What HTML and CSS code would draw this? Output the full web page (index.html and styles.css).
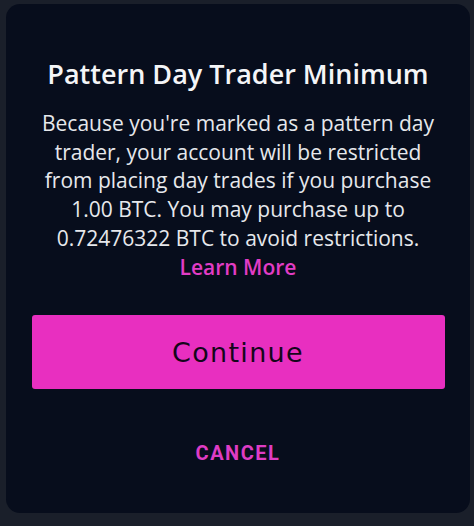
FILE: index.html
```html
<!DOCTYPE html>
<html>
<head>
<meta charset="utf-8">
<link rel="stylesheet" href="styles.css">
</head>
<body>
<div class="modal">
  <h1 class="title">Pattern Day Trader Minimum</h1>
  <p class="body">Because you're marked as a pattern day<br>trader, your account will be restricted<br>from placing day trades if you purchase<br>1.00 BTC. You may purchase up to<br>0.72476322 BTC to avoid restrictions.</p>
  <a class="learn">Learn More</a>
  <button class="continue">Continue</button>
  <button class="cancel">CANCEL</button>
</div>
</body>
</html>
```
FILE: styles.css
```css
html, body {
  margin: 0;
  padding: 0;
  background: #1a1f2a;
  width: 474px;
  height: 526px;
  overflow: hidden;
}
body {
  padding: 4px 4px 0 6px;
  box-sizing: border-box;
  font-family: "Open Sans", "DejaVu Sans", sans-serif;
}
.modal {
  background: #070d1c;
  border-radius: 14px;
  height: 509px;
  display: flex;
  flex-direction: column;
  align-items: center;
  box-sizing: border-box;
  padding: 54px 0 0 0;
}
.title {
  margin: 0;
  color: #f4f5f7;
  font-size: 27px;
  font-weight: 600;
  line-height: 32px;
  white-space: nowrap;
}
.body {
  margin: 19px 0 0 0;
  color: #e6e8ec;
  font-size: 21px;
  font-weight: 400;
  line-height: 28.7px;
  text-align: center;
  white-space: nowrap;
}
.learn {
  color: #e23cc6;
  font-size: 21px;
  font-weight: 600;
  line-height: 28.7px;
}
.continue {
  margin-top: 34px;
  width: 413px;
  height: 74px;
  border: none;
  border-radius: 3px;
  background: #e82fc0;
  color: #14061a;
  font-family: "DejaVu Sans", sans-serif;
  font-size: 27px;
  letter-spacing: 1.3px;
  font-weight: 500;
  padding: 0;
}
.cancel {
  margin-top: 52px;
  border: none;
  background: none;
  color: #de3cc4;
  font-family: "Roboto", "DejaVu Sans", sans-serif;
  font-weight: 700;
  font-size: 20px;
  line-height: 24px;
  letter-spacing: 1.5px;
  padding: 0;
}
```
